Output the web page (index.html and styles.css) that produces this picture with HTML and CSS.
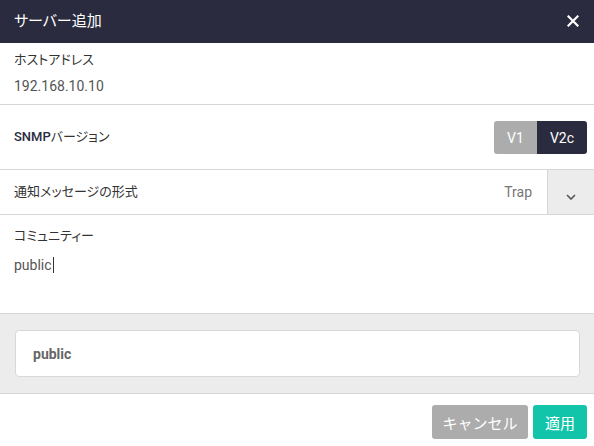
FILE: index.html
```html
<!DOCTYPE html>
<html lang="ja">
<head>
<meta charset="utf-8">
<link rel="stylesheet" href="styles.css">
</head>
<body>
<div class="dialog">
  <div class="header">
    <span class="title">サーバー追加</span>
    <svg class="close" width="12" height="12" viewBox="0 0 12 12"><path d="M1.5 1.5L10.5 10.5M10.5 1.5L1.5 10.5" stroke="#fff" stroke-width="2.2" stroke-linecap="square"/></svg>
  </div>
  <div class="row host">
    <div class="label">ホストアドレス</div>
    <div class="value">192.168.10.10</div>
  </div>
  <div class="row snmp">
    <div class="label"><span class="strong">SNMP</span>バージョン</div>
    <div class="segment">
      <span class="seg off">V1</span>
      <span class="seg on">V2c</span>
    </div>
  </div>
  <div class="row notify">
    <div class="label">通知メッセージの形式</div>
    <div class="select">
      <span class="select-text">Trap</span>
      <span class="select-btn"><svg width="10" height="6" viewBox="0 0 10 6"><path d="M1 1L5 5L9 1" fill="none" stroke="#555" stroke-width="1.6"/></svg></span>
    </div>
  </div>
  <div class="row community">
    <div class="label">コミュニティー</div>
    <div class="value"><span class="caret">public</span></div>
  </div>
  <div class="preview">
    <div class="preview-box">public</div>
  </div>
  <div class="footer">
    <button class="btn cancel">キャンセル</button>
    <button class="btn apply">適用</button>
  </div>
</div>
</body>
</html>
```
FILE: styles.css
```css
html, body {
  margin: 0;
  padding: 0;
  background: #fff;
}
body {
  font-family: Roboto, "Noto Sans CJK JP", sans-serif;
  color: #333;
  width: 594px;
  height: 446px;
  overflow: hidden;
}
.dialog {
  display: flex;
  flex-direction: column;
}
.header {
  height: 43px;
  background: #2a2b3e;
  display: flex;
  align-items: center;
  justify-content: space-between;
  padding: 0 15px 0 14px;
  box-sizing: border-box;
}
.title {
  color: #fff;
  font-size: 15px;
  line-height: 20px;
  margin-top: -2px;
  font-feature-settings: "palt";
}
.close {
  display: block;
  margin-top: -2px;
}
.row {
  border-bottom: 1px solid #d7d7d7;
  padding-left: 14px;
  box-sizing: border-box;
}
.label {
  font-size: 13px;
  line-height: 18px;
  color: #333;
  font-feature-settings: "palt";
}
.value {
  font-size: 14px;
  line-height: 20px;
  color: #555;
}
.host {
  height: 62px;
  padding-top: 8px;
}
.host .value {
  margin-top: 7px;
}
.snmp {
  height: 65px;
  display: flex;
  align-items: center;
  justify-content: space-between;
  padding-right: 7px;
}
.strong {
  font-weight: 500;
  color: #2a2b3e;
}
.segment {
  display: flex;
  height: 33px;
  border-radius: 3px;
  overflow: hidden;
  margin-top: 1px;
}
.seg {
  display: flex;
  align-items: center;
  justify-content: center;
  color: #fff;
  font-size: 14px;
}
.seg.off {
  width: 43px;
  background: #acacac;
}
.seg.on {
  width: 50px;
  background: #2a2b3e;
}
.notify {
  height: 45px;
  display: flex;
  align-items: center;
  justify-content: space-between;
}
.select {
  display: flex;
  align-items: stretch;
  height: 100%;
}
.select-text {
  font-size: 14px;
  color: #777;
  display: flex;
  align-items: center;
  margin-right: 15px;
}
.select-btn {
  width: 47px;
  background: #ececec;
  border-left: 1px solid #d7d7d7;
  box-sizing: border-box;
  display: flex;
  align-items: center;
  justify-content: center;
  padding-top: 9px;
}
.select-btn svg {
  display: block;
}
.community {
  height: 99px;
  padding-top: 12px;
}
.community .value {
  margin-top: 10px;
}
.caret {
  border-right: 1px solid #333;
  padding-right: 1px;
}
.preview {
  height: 80px;
  background: #ececec;
  border-bottom: 1px solid #d7d7d7;
  box-sizing: border-box;
  padding: 16px 14px 0 15px;
}
.preview-box {
  height: 47px;
  background: #fff;
  border: 1px solid #d8d8d8;
  border-radius: 4px;
  box-sizing: border-box;
  display: flex;
  align-items: center;
  padding-left: 17px;
  font-size: 14px;
  font-weight: 700;
  color: #666;
}
.footer {
  display: flex;
  justify-content: flex-end;
  gap: 5px;
  padding: 11px 7px 0 0;
}
.btn {
  height: 34px;
  border: none;
  border-radius: 3px;
  color: #fff;
  font-family: Roboto, "Noto Sans CJK JP", sans-serif;
  font-size: 15px;
  padding: 0;
}
.btn.cancel {
  width: 96px;
  background: #acacac;
}
.btn.apply {
  width: 54px;
  background: #12c4a9;
}
```
